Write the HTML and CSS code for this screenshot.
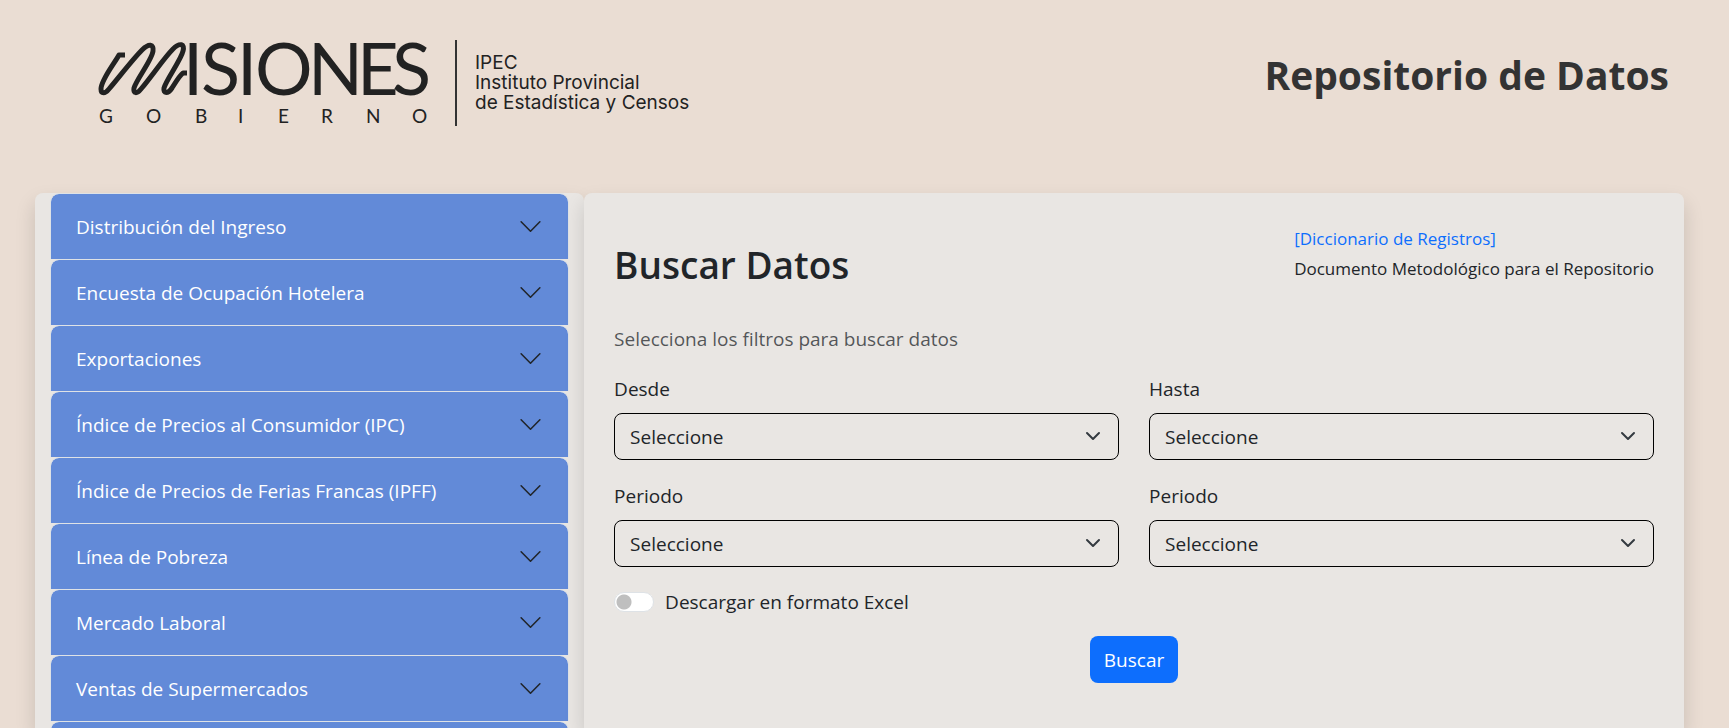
FILE: index.html
```html
<!DOCTYPE html>
<html lang="es">
<head>
<meta charset="utf-8">
<meta name="viewport" content="width=device-width, initial-scale=1">
<title>Repositorio de Datos</title>
<link rel="stylesheet" href="styles.css">
</head>
<body>
<header class="header">
  <div class="brand">
    <svg class="brand-logo" width="332" height="86" viewBox="0 0 332 86" role="img" aria-label="Misiones Gobierno">
      <path class="brand-swash" d="M26 15H20C15 24 2 40 2 49C2 54 6 54 10 49C21 36 34 19 43 10C50 3 55 4 54 11C53 20 37 40 35 48C34 54 38 54 42 49C53 36 65 18 74 9C81 2 86 4 84 11C82 20 67 40 65 48C64 54 69 54 73 48C78 40 81 35 84 33H88"/>
      <text class="brand-name" y="55" x="84 102 138 156 209 258 293">ISIONES</text>
      <text class="brand-sub" y="83" x="0 47 96 139 179 222 267 313">GOBIERNO</text>
    </svg>
    <p class="brand-office">IPEC<br>Instituto Provincial<br>de Estadística y Censos</p>
  </div>
  <h1 class="title">Repositorio de Datos</h1>
</header>
<main class="layout">
  <nav class="sidebar" aria-label="Categorías">
    <button class="item" type="button">Distribución del Ingreso<svg class="chevron" viewBox="0 0 16 16"><path d="m2 5 6 6 6-6"/></svg></button>
    <button class="item" type="button">Encuesta de Ocupación Hotelera<svg class="chevron" viewBox="0 0 16 16"><path d="m2 5 6 6 6-6"/></svg></button>
    <button class="item" type="button">Exportaciones<svg class="chevron" viewBox="0 0 16 16"><path d="m2 5 6 6 6-6"/></svg></button>
    <button class="item" type="button">Índice de Precios al Consumidor (IPC)<svg class="chevron" viewBox="0 0 16 16"><path d="m2 5 6 6 6-6"/></svg></button>
    <button class="item" type="button">Índice de Precios de Ferias Francas (IPFF)<svg class="chevron" viewBox="0 0 16 16"><path d="m2 5 6 6 6-6"/></svg></button>
    <button class="item" type="button">Línea de Pobreza<svg class="chevron" viewBox="0 0 16 16"><path d="m2 5 6 6 6-6"/></svg></button>
    <button class="item" type="button">Mercado Laboral<svg class="chevron" viewBox="0 0 16 16"><path d="m2 5 6 6 6-6"/></svg></button>
    <button class="item" type="button">Ventas de Supermercados<svg class="chevron" viewBox="0 0 16 16"><path d="m2 5 6 6 6-6"/></svg></button>
    <button class="item" type="button" aria-label="Más categorías"></button>
  </nav>
  <section class="panel">
    <div class="panel-head">
      <h2 class="panel-title">Buscar Datos</h2>
      <div class="docs"><a class="docs-link" href="#">[Diccionario de Registros]</a><br>Documento Metodológico para el Repositorio</div>
    </div>
    <p class="hint">Selecciona los filtros para buscar datos</p>
    <form class="form">
      <div class="fields">
        <div class="field"><label for="desde">Desde</label><div class="control"><select id="desde"><option>Seleccione</option></select><svg class="caret" viewBox="0 0 16 16"><path d="m2 5 6 6 6-6"/></svg></div></div>
        <div class="field"><label for="hasta">Hasta</label><div class="control"><select id="hasta"><option>Seleccione</option></select><svg class="caret" viewBox="0 0 16 16"><path d="m2 5 6 6 6-6"/></svg></div></div>
        <div class="field"><label for="periodo1">Periodo</label><div class="control"><select id="periodo1"><option>Seleccione</option></select><svg class="caret" viewBox="0 0 16 16"><path d="m2 5 6 6 6-6"/></svg></div></div>
        <div class="field"><label for="periodo2">Periodo</label><div class="control"><select id="periodo2"><option>Seleccione</option></select><svg class="caret" viewBox="0 0 16 16"><path d="m2 5 6 6 6-6"/></svg></div></div>
      </div>
      <div class="switch"><input class="toggle" type="checkbox" role="switch" id="excel"><label for="excel">Descargar en formato Excel</label></div>
      <button class="submit" type="submit">Buscar</button>
    </form>
  </section>
</main>
</body>
</html>
```
FILE: styles.css
```css
* { box-sizing: border-box; }
body {
  margin: 0;
  height: 100vh;
  overflow: hidden;
  display: flex;
  flex-direction: column;
  background: #eaddd3;
  color: #212529;
  font: 19px/30px "Segoe UI", "Open Sans", "Noto Sans", sans-serif;
}
h1, h2, p { margin: 0; }
button, select { font: inherit; color: inherit; }

.header {
  display: flex;
  justify-content: space-between;
  align-items: flex-start;
  flex: none;
  padding: 40px 60px 67px 99px;
}
.brand { display: flex; }
.brand-logo { flex: none; overflow: visible; fill: #222; }
.brand-swash { fill: none; stroke: #222; stroke-width: 5; stroke-linejoin: round; }
.brand-name { font: 72px Lato, sans-serif; }
.brand-sub { font: 19px Lato, sans-serif; }
.brand-office {
  margin-left: 24px;
  padding: 13px 0 13px 18px;
  border-left: 2px solid #333;
  color: #222;
  font: 19px/20px Inter, sans-serif;
}
.title { padding-top: 5px; color: #333; font-size: 39px; line-height: 60px; font-weight: 700; }

.layout {
  flex: 1 1 0;
  min-height: 0;
  display: grid;
  grid-template-columns: 33.3% 1fr;
  grid-template-rows: minmax(0, 1fr);
  padding: 0 45px 0 35px;
}
.sidebar, .panel {
  border-radius: 8px 8px 0 0;
  background: #e9e6e3;
  box-shadow: 0 10px 20px rgba(0, 0, 0, .15);
}
.sidebar { padding: 0 15px; overflow: hidden; }
.item {
  display: flex;
  justify-content: space-between;
  align-items: center;
  width: 100%;
  height: 66px;
  padding: 0 25px;
  border: 1px solid #dee2e6;
  border-bottom: 0;
  border-radius: 9px 9px 0 0;
  background: #628ad8;
  background-clip: padding-box;
  color: #fff;
  text-align: left;
}
.chevron { width: 25px; height: 25px; fill: none; stroke: #212529; stroke-linecap: round; stroke-linejoin: round; }

.panel { padding: 31px 30px; }
.panel-head { display: flex; justify-content: space-between; align-items: flex-start; }
.panel-title { padding-top: 17px; font-size: 37px; line-height: 48px; font-weight: 600; }
.docs { font-size: 17px; }
.docs-link { color: #0d6efd; text-decoration: none; }
.hint { margin-top: 35px; color: rgba(33, 37, 41, .75); }
.form { display: flex; flex-direction: column; align-items: flex-start; padding-top: 20px; }
.fields { display: grid; grid-template-columns: 1fr 1fr; gap: 21px 30px; width: 100%; }
.field label { display: block; margin-bottom: 9px; }
.control { position: relative; }
.control select {
  display: block;
  width: 100%;
  height: 47px;
  padding: 0 45px 0 15px;
  border: 1px solid #000;
  border-radius: 8px;
  background: transparent;
  appearance: none;
}
.caret {
  position: absolute;
  right: 18px;
  top: 15px;
  width: 16px;
  height: 16px;
  fill: none;
  stroke: #343a40;
  stroke-width: 2;
  stroke-linecap: round;
  stroke-linejoin: round;
  pointer-events: none;
}
.switch { display: flex; align-items: center; gap: 11px; margin-top: 20px; }
.toggle {
  width: 40px;
  height: 20px;
  margin: 0;
  border: 1px solid #dee2e6;
  border-radius: 10px;
  background: #fff radial-gradient(circle at 9px 9px, #bfbfbf 7px, #fff 8px);
  appearance: none;
}
.submit {
  align-self: center;
  height: 47px;
  margin-top: 19px;
  padding: 0 14px;
  border: 0;
  border-radius: 8px;
  background: #0d6efd;
  color: #fff;
}
```
